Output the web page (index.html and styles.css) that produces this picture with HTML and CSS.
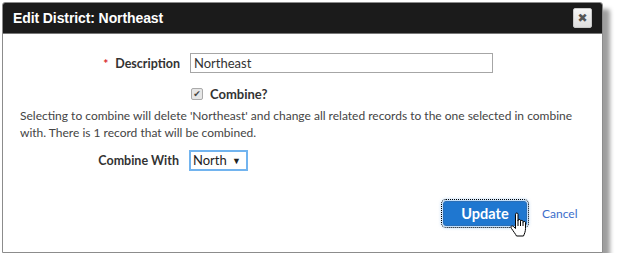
FILE: index.html
```html
<!DOCTYPE html>
<html>
<head>
<meta charset="utf-8">
<link rel="stylesheet" href="styles.css">
</head>
<body>
<div class="dialog">
  <div class="titlebar">
    <span class="title">Edit District: Northeast</span>
    <span class="close">&#x2716;</span>
  </div>
  <div class="content">
    <div class="row desc-row">
      <label class="label"><span class="req">*</span>Description</label>
      <div class="field"><div class="textbox">Northeast</div></div>
    </div>
    <div class="row check-row">
      <span></span>
      <div class="field check-field"><span class="checkbox">&#x2714;</span><span class="check-label">Combine?</span></div>
    </div>
    <p class="note">Selecting to combine will delete 'Northeast' and change all related records to the one selected in combine with. There is 1 record that will be combined.</p>
    <div class="row combine-row">
      <label class="label">Combine With</label>
      <div class="field"><div class="select">North <span class="arrow">&#x25BC;</span></div></div>
    </div>
    <div class="actions">
      <span class="update-wrap">
        <span class="update">Update</span>
        <svg class="hand" width="20" height="26" viewBox="0 0 20 26">
          <path d="M6.5,2.2 C6.5,0.6 9,0.6 9,2.2 L9,9 L9,8.6 C9,7 11.5,7 11.5,8.6 L11.5,9.6 C11.5,8 14,8 14,9.6 L14,10.6 C14,9 16.5,9 16.5,10.6 L16.5,16.5 C16.5,19.5 15.5,21.5 14.5,24 L7.5,24 C6.5,22 4.5,19.5 2.5,16.5 C1.2,14.6 2.6,13 4.2,14.3 L6.5,16.5 Z" fill="#fff" stroke="#000" stroke-width="1" stroke-linejoin="round"/>
          <path d="M9,9 V14 M11.5,9.6 V14 M14,10.6 V14" stroke="#000" stroke-width="1" fill="none"/>
        </svg>
      </span>
      <a class="cancel">Cancel</a>
    </div>
  </div>
</div>
</body>
</html>
```

FILE: styles.css
```css
html, body {
  margin: 0;
  padding: 0;
  background: #fff;
}
body {
  padding: 2px 0 0 2px;
  font-family: Lato, "Liberation Sans", sans-serif;
}
.dialog {
  width: 599px;
  height: 249px;
  border: 1px solid #8c8c8c;
  border-radius: 3px 3px 0 0;
  background: #fff;
  box-shadow: 7px 7px 4px rgba(0, 0, 0, 0.38);
  display: flex;
  flex-direction: column;
}
.titlebar {
  height: 30px;
  background: #1b1b1b;
  border-bottom: 1px solid #777;
  border-radius: 2px 2px 0 0;
  display: flex;
  align-items: center;
  justify-content: space-between;
  padding: 0 10px 0 10px;
}
.title {
  color: #fff;
  font-family: "Liberation Sans", Arial, sans-serif;
  font-weight: bold;
  font-size: 14px;
  letter-spacing: -0.1px;
}
.close {
  width: 17px;
  height: 18px;
  background: linear-gradient(#f6f6f6, #dedede);
  border: 1px solid #c8c8c8;
  border-radius: 2px;
  color: #555;
  font-size: 12px;
  line-height: 18px;
  text-align: center;
  font-family: "DejaVu Sans", sans-serif;
}
.content {
  flex: 1;
  padding-top: 19px;
  display: flex;
  flex-direction: column;
}
.row {
  display: grid;
  grid-template-columns: 187px 1fr;
  align-items: center;
}
.label {
  text-align: right;
  padding-right: 10px;
  font-weight: bold;
  font-size: 12.5px;
  color: #333;
}
.req {
  color: #d9262b;
  margin-right: 7px;
  font-size: 12px;
}
.textbox {
  width: 298px;
  height: 18px;
  border: 1px solid #a6a6a6;
  font-size: 13px;
  line-height: 18px;
  padding-left: 3px;
  color: #333;
}
.check-row {
  margin-top: 13px;
}
.check-field {
  display: flex;
  align-items: center;
}
.checkbox {
  width: 10px;
  height: 10px;
  border: 1px solid #aaa;
  border-radius: 2px;
  background: #e6e6e6;
  color: #444;
  font-size: 9px;
  line-height: 10px;
  text-align: center;
  font-family: "DejaVu Sans", sans-serif;
  margin-left: 1px;
}
.check-label {
  margin-left: 7px;
  font-weight: bold;
  font-size: 13px;
  color: #333;
}
.note {
  margin: 5px 0 0 0;
  padding: 0 20px 0 17px;
  font-size: 12px;
  line-height: 17px;
  color: #444;
}
.combine-row {
  margin-top: 8px;
  grid-template-columns: 186px 1fr;
}
.select {
  display: inline-block;
  border: 2px solid #72b4ef;
  height: 17px;
  line-height: 17px;
  padding: 0 5px 0 2px;
  font-size: 13px;
  color: #222;
}
.arrow {
  font-size: 9px;
  margin-left: 2px;
  vertical-align: 1px;
}
.actions {
  margin-top: 30px;
  display: flex;
  align-items: center;
  padding-left: 440px;
}
.update-wrap {
  position: relative;
}
.update {
  display: inline-block;
  width: 82px;
  height: 23px;
  line-height: 23px;
  text-align: center;
  background: #1f77d0;
  border: 1px solid #2a6fb8;
  border-radius: 3px;
  color: #fff;
  font-weight: bold;
  font-size: 14.5px;
  outline: 1px dotted #000;
  outline-offset: 1px;
  box-shadow: 0 0 3px 2px rgba(120, 180, 240, 0.5);
}
.hand {
  position: absolute;
  left: 66px;
  top: 11px;
}
.cancel {
  margin-left: 15px;
  color: #3b6dcb;
  font-size: 12px;
}
```
